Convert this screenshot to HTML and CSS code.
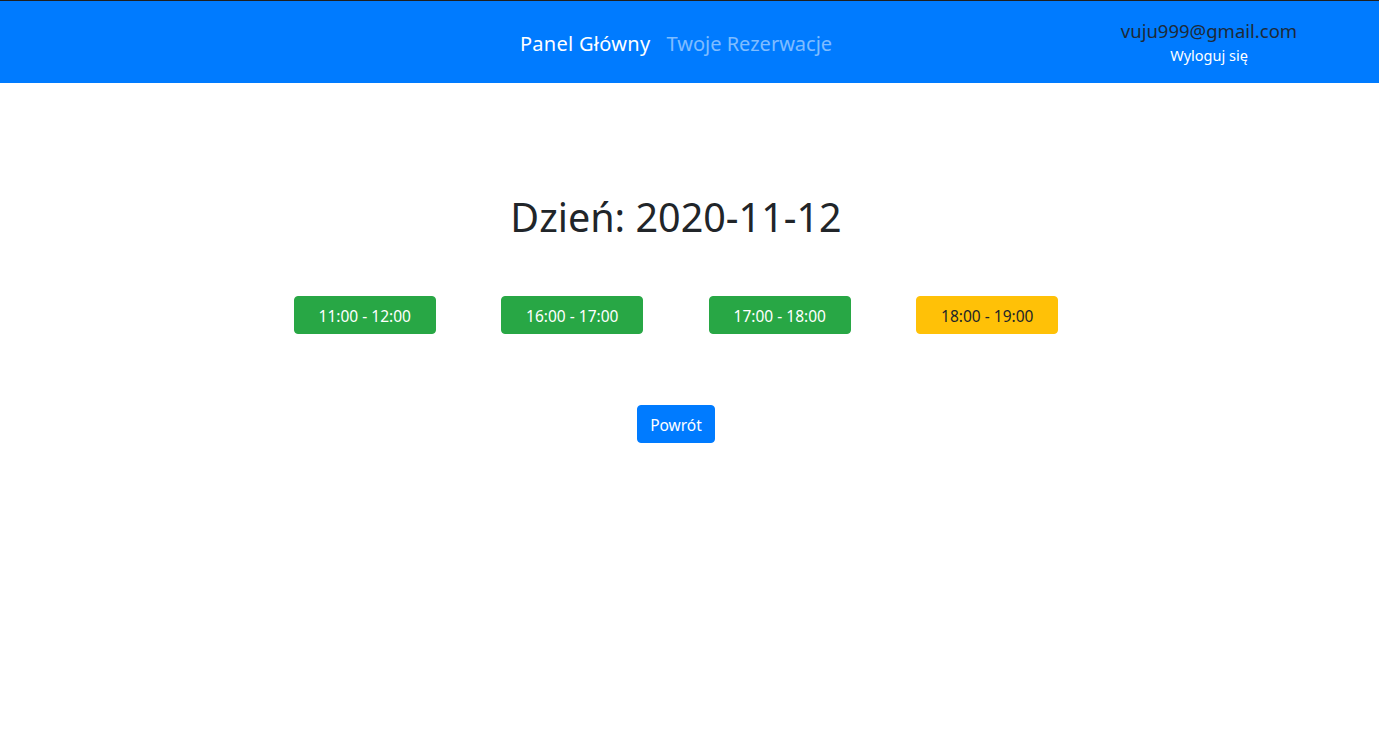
FILE: index.html
```html
<!DOCTYPE html>
<html lang="pl">
<head>
<meta charset="utf-8">
<title>Rezerwacje</title>
<link rel="stylesheet" href="styles.css">
</head>
<body>
<header class="navbar">
  <div class="navbar-inner">
    <nav class="nav">
      <a class="nav-link active" href="#">Panel Główny</a>
      <a class="nav-link" href="#">Twoje Rezerwacje</a>
    </nav>
    <div class="user">
      <div class="user-email">vuju999@gmail.com</div>
      <a class="logout" href="#">Wyloguj się</a>
    </div>
  </div>
</header>
<main class="content">
  <h1 class="day-title">Dzień: 2020-11-12</h1>
  <div class="slots">
    <div class="slot-col"><button class="btn btn-success">11:00 - 12:00</button></div>
    <div class="slot-col"><button class="btn btn-success">16:00 - 17:00</button></div>
    <div class="slot-col"><button class="btn btn-success">17:00 - 18:00</button></div>
    <div class="slot-col"><button class="btn btn-warning">18:00 - 19:00</button></div>
  </div>
  <div class="back">
    <button class="btn btn-primary">Powrót</button>
  </div>
</main>
</body>
</html>
```
FILE: styles.css
```css
* { box-sizing: border-box; }
html, body { margin: 0; padding: 0; background: #fff; }
body {
  font-family: "Noto Sans", "Open Sans", sans-serif;
  color: #212529;
  width: 1379px;
}
.navbar {
  border-top: 1px solid #1f1f1f;
  background: #007bff;
  height: 83px;
}
.navbar-inner {
  width: 1352px;
  height: 82px;
  position: relative;
  display: flex;
  justify-content: center;
  align-items: center;
}
.nav { display: flex; gap: 16px; padding-top: 2px; }
.nav-link {
  font-size: 20px;
  text-decoration: none;
  color: rgba(255,255,255,0.5);
}
.nav-link.active { color: #fff; letter-spacing: 0.3px; }
.user {
  position: absolute;
  left: 1119px;
  top: 17px;
  width: 180px;
  text-align: center;
  display: flex;
  flex-direction: column;
  align-items: center;
}
.user-email {
  font-size: 18.5px;
  color: #1e2a38;
  line-height: 26px;
  white-space: nowrap;
}
.logout {
  font-size: 14.5px;
  color: #fff;
  text-decoration: none;
  line-height: 22px;
}
.content {
  width: 1352px;
  display: flex;
  flex-direction: column;
  align-items: center;
}
.day-title {
  margin: 110px 0 0;
  font-size: 39.5px;
  font-weight: 400;
  line-height: 48px;
}
.slots {
  margin-top: 55px;
  display: flex;
  width: 830px;
}
.slot-col {
  flex: 1;
  display: flex;
  justify-content: center;
}
.btn {
  font-family: inherit;
  border: 1px solid transparent;
  border-radius: 4px;
  height: 38px;
  padding: 2px 0 0;
  cursor: pointer;
}
.slots .btn {
  width: 142px;
  font-size: 15.5px;
}
.btn-success { background: #28a745; border-color: #28a745; color: #fff; }
.btn-warning { background: #ffc107; border-color: #ffc107; color: #212529; }
.btn-primary { background: #007bff; border-color: #007bff; color: #fff; }
.back { margin-top: 71px; }
.back .btn { width: 78px; font-size: 15.5px; }
```
